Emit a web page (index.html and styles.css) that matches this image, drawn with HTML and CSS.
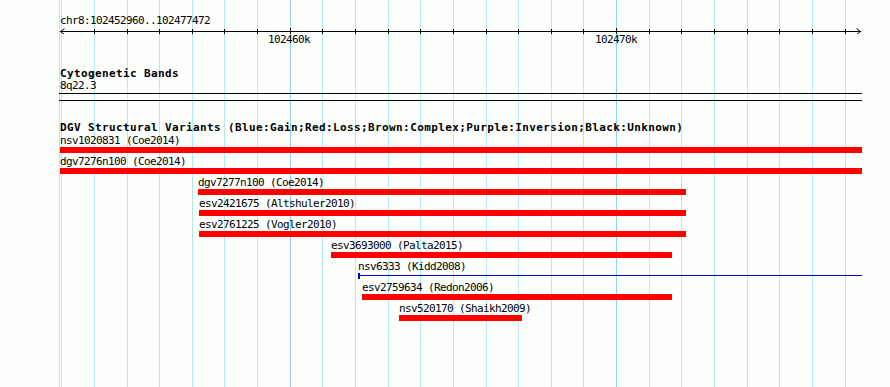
FILE: index.html
```html
<!DOCTYPE html>
<html>
<head>
<meta charset="utf-8">
<title>DGV track view</title>
<link rel="stylesheet" href="styles.css">
</head>
<body>
<div class="panel">
  <div class="grid">
    <span class="gl" style="left:59px"></span>
    <span class="gl" style="left:61px"></span>
    <span class="gl" style="left:94px"></span>
    <span class="gl" style="left:127px"></span>
    <span class="gl" style="left:159px"></span>
    <span class="gl" style="left:192px"></span>
    <span class="gl" style="left:224px"></span>
    <span class="gl" style="left:257px"></span>
    <span class="gl major" style="left:290px"></span>
    <span class="gl" style="left:322px"></span>
    <span class="gl" style="left:355px"></span>
    <span class="gl" style="left:388px"></span>
    <span class="gl" style="left:420px"></span>
    <span class="gl" style="left:453px"></span>
    <span class="gl" style="left:486px"></span>
    <span class="gl" style="left:518px"></span>
    <span class="gl" style="left:551px"></span>
    <span class="gl" style="left:583px"></span>
    <span class="gl major" style="left:616px"></span>
    <span class="gl" style="left:649px"></span>
    <span class="gl" style="left:681px"></span>
    <span class="gl" style="left:714px"></span>
    <span class="gl" style="left:747px"></span>
    <span class="gl" style="left:779px"></span>
    <span class="gl" style="left:812px"></span>
    <span class="gl" style="left:845px"></span>
  </div>

  <div class="content">
    <div class="ruler">
      <div class="mono ruler-title">chr8:102452960..102477472</div>
      <svg class="axis" width="890" height="7" viewBox="0 0 890 7" shape-rendering="crispEdges">
        <rect x="60" y="4" width="801" height="1" fill="#000"/>
        <g fill="#000">
          <rect x="94" y="2" width="1" height="5"/>
          <rect x="127" y="2" width="1" height="5"/>
          <rect x="159" y="2" width="1" height="5"/>
          <rect x="192" y="2" width="1" height="5"/>
          <rect x="224" y="2" width="1" height="5"/>
          <rect x="257" y="2" width="1" height="5"/>
          <rect x="290" y="1" width="1" height="6"/>
          <rect x="322" y="2" width="1" height="5"/>
          <rect x="355" y="2" width="1" height="5"/>
          <rect x="388" y="2" width="1" height="5"/>
          <rect x="420" y="2" width="1" height="5"/>
          <rect x="453" y="2" width="1" height="5"/>
          <rect x="486" y="2" width="1" height="5"/>
          <rect x="518" y="2" width="1" height="5"/>
          <rect x="551" y="2" width="1" height="5"/>
          <rect x="583" y="2" width="1" height="5"/>
          <rect x="616" y="1" width="1" height="6"/>
          <rect x="649" y="2" width="1" height="5"/>
          <rect x="681" y="2" width="1" height="5"/>
          <rect x="714" y="2" width="1" height="5"/>
          <rect x="747" y="2" width="1" height="5"/>
          <rect x="779" y="2" width="1" height="5"/>
          <rect x="812" y="2" width="1" height="5"/>
          <rect x="845" y="2" width="1" height="5"/>
        </g>
        <path d="M64.5 1.5 L60.5 4.5 L64.5 7.5" fill="none" stroke="#000" stroke-width="1" shape-rendering="auto"/>
        <path d="M856.5 1.5 L860.5 4.5 L856.5 7.5" fill="none" stroke="#000" stroke-width="1" shape-rendering="auto"/>
      </svg>
      <div class="ticklabels">
        <span class="mono tl" style="left:268px">102460k</span>
        <span class="mono tl" style="left:595px">102470k</span>
      </div>
    </div>

    <section class="track cyto">
      <div class="track-title">Cytogenetic Bands</div>
      <div class="mono band-label">8q22.3</div>
      <div class="band"></div>
    </section>

    <section class="track dgv">
      <div class="track-title dgv-title">DGV Structural Variants (Blue:Gain;Red:Loss;Brown:Complex;Purple:Inversion;Black:Unknown)</div>

      <div class="feature" style="margin-left:60px">
        <div class="mono flabel">nsv1020831 (Coe2014)</div>
        <div class="fbar loss" style="width:802px"></div>
      </div>
      <div class="feature" style="margin-left:60px">
        <div class="mono flabel">dgv7276n100 (Coe2014)</div>
        <div class="fbar loss" style="width:802px"></div>
      </div>
      <div class="feature" style="margin-left:198px">
        <div class="mono flabel">dgv7277n100 (Coe2014)</div>
        <div class="fbar loss" style="width:488px"></div>
      </div>
      <div class="feature" style="margin-left:199px">
        <div class="mono flabel">esv2421675 (Altshuler2010)</div>
        <div class="fbar loss" style="width:487px"></div>
      </div>
      <div class="feature" style="margin-left:199px">
        <div class="mono flabel">esv2761225 (Vogler2010)</div>
        <div class="fbar loss" style="width:487px"></div>
      </div>
      <div class="feature" style="margin-left:331px">
        <div class="mono flabel">esv3693000 (Palta2015)</div>
        <div class="fbar loss" style="width:341px"></div>
      </div>
      <div class="feature" style="margin-left:358px">
        <div class="mono flabel">nsv6333 (Kidd2008)</div>
        <div class="fbar gain" style="width:504px"></div>
      </div>
      <div class="feature" style="margin-left:362px">
        <div class="mono flabel">esv2759634 (Redon2006)</div>
        <div class="fbar loss" style="width:310px"></div>
      </div>
      <div class="feature" style="margin-left:399px">
        <div class="mono flabel">nsv520170 (Shaikh2009)</div>
        <div class="fbar loss" style="width:123px"></div>
      </div>
    </section>
  </div>
</div>
</body>
</html>
```

FILE: styles.css
```css
html, body {
  margin: 0;
  padding: 0;
  background: #fdfffd;
}

body {
  font-family: "DejaVu Sans Mono", "Liberation Mono", monospace;
  color: #000;
}

.panel {
  position: relative;
  width: 890px;
  height: 387px;
  overflow: hidden;
}

.grid {
  position: absolute;
  top: 0;
  left: 0;
  right: 0;
  bottom: 0;
}

.gl {
  position: absolute;
  top: 0;
  bottom: 0;
  width: 1px;
  background: #b3eaee;
}

.gl.major {
  background: #8fd0ef;
}

.content {
  position: relative;
  padding-top: 15px;
}

.mono {
  font-size: 11px;
  letter-spacing: -0.62px;
  line-height: 12px;
  white-space: nowrap;
}

.ruler-title {
  padding-left: 60px;
}

.axis {
  display: block;
}

.ticklabels {
  position: relative;
  height: 12px;
}

.tl {
  position: absolute;
  top: 0;
}

.track-title {
  font-weight: bold;
  font-size: 11px;
  letter-spacing: 0.38px;
  line-height: 12px;
  white-space: nowrap;
  padding-left: 60px;
}

.cyto {
  margin-top: 22px;
}

.band-label {
  padding-left: 60px;
}

.band {
  margin: 1px 0 0 59px;
  width: 803px;
  height: 6px;
  border-top: 1px solid #000;
  border-bottom: 1px solid #000;
}

.dgv {
  margin-top: 21px;
}

.dgv-title {
  margin-bottom: 1px;
}

.feature {
  padding-bottom: 3px;
}

.flabel {
  height: 12px;
}

.fbar {
  height: 6px;
}

.fbar.loss {
  background: #ff0000;
}

.fbar.gain {
  box-sizing: border-box;
  border-left: 2px solid #0000cc;
  background: linear-gradient(#0000cc, #0000cc) 0 2px / 100% 1px no-repeat;
}
```
